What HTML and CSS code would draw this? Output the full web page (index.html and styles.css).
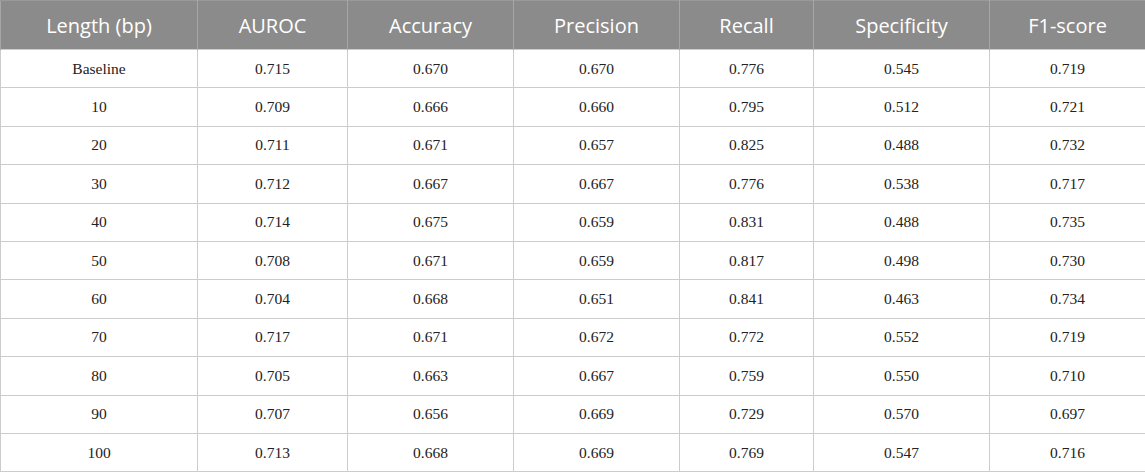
FILE: index.html
```html
<!DOCTYPE html>
<html>
<head>
<meta charset="utf-8">
<link rel="stylesheet" href="styles.css">
</head>
<body>
<table class="results">
  <colgroup>
    <col class="c1"><col class="c2"><col class="c3"><col class="c4"><col class="c5"><col class="c6"><col class="c7">
  </colgroup>
  <thead>
    <tr><th>Length (bp)</th><th>AUROC</th><th>Accuracy</th><th>Precision</th><th>Recall</th><th>Specificity</th><th>F1-score</th></tr>
  </thead>
  <tbody>
    <tr><td>Baseline</td><td>0.715</td><td>0.670</td><td>0.670</td><td>0.776</td><td>0.545</td><td>0.719</td></tr>
    <tr><td>10</td><td>0.709</td><td>0.666</td><td>0.660</td><td>0.795</td><td>0.512</td><td>0.721</td></tr>
    <tr><td>20</td><td>0.711</td><td>0.671</td><td>0.657</td><td>0.825</td><td>0.488</td><td>0.732</td></tr>
    <tr><td>30</td><td>0.712</td><td>0.667</td><td>0.667</td><td>0.776</td><td>0.538</td><td>0.717</td></tr>
    <tr><td>40</td><td>0.714</td><td>0.675</td><td>0.659</td><td>0.831</td><td>0.488</td><td>0.735</td></tr>
    <tr><td>50</td><td>0.708</td><td>0.671</td><td>0.659</td><td>0.817</td><td>0.498</td><td>0.730</td></tr>
    <tr><td>60</td><td>0.704</td><td>0.668</td><td>0.651</td><td>0.841</td><td>0.463</td><td>0.734</td></tr>
    <tr><td>70</td><td>0.717</td><td>0.671</td><td>0.672</td><td>0.772</td><td>0.552</td><td>0.719</td></tr>
    <tr><td>80</td><td>0.705</td><td>0.663</td><td>0.667</td><td>0.759</td><td>0.550</td><td>0.710</td></tr>
    <tr><td>90</td><td>0.707</td><td>0.656</td><td>0.669</td><td>0.729</td><td>0.570</td><td>0.697</td></tr>
    <tr><td>100</td><td>0.713</td><td>0.668</td><td>0.669</td><td>0.769</td><td>0.547</td><td>0.716</td></tr>
  </tbody>
</table>
</body>
</html>
```
FILE: styles.css
```css
html, body {
  margin: 0;
  padding: 0;
  background: #ffffff;
}

.results {
  width: 1145px;
  border-collapse: collapse;
  table-layout: fixed;
}

.c1 { width: 197px; }
.c2 { width: 150px; }
.c3 { width: 166px; }
.c4 { width: 166px; }
.c5 { width: 134px; }
.c6 { width: 176px; }
.c7 { width: 156px; }

.results th {
  height: 48px;
  padding: 0;
  background: #8b8b8b;
  color: #ffffff;
  font-family: "Open Sans", "Noto Sans", sans-serif;
  font-weight: 400;
  font-size: 20px;
  text-align: center;
  vertical-align: middle;
  border-left: 1px solid #a6a6a6;
  border-right: 1px solid #a6a6a6;
  border-top: 1px solid #9a9a9a;
}

.results td {
  height: 37.4px;
  padding: 0;
  color: #222222;
  font-family: "Liberation Serif", "Times New Roman", serif;
  font-size: 15.5px;
  text-align: center;
  vertical-align: middle;
  border: 1px solid #cccccc;
}
```
